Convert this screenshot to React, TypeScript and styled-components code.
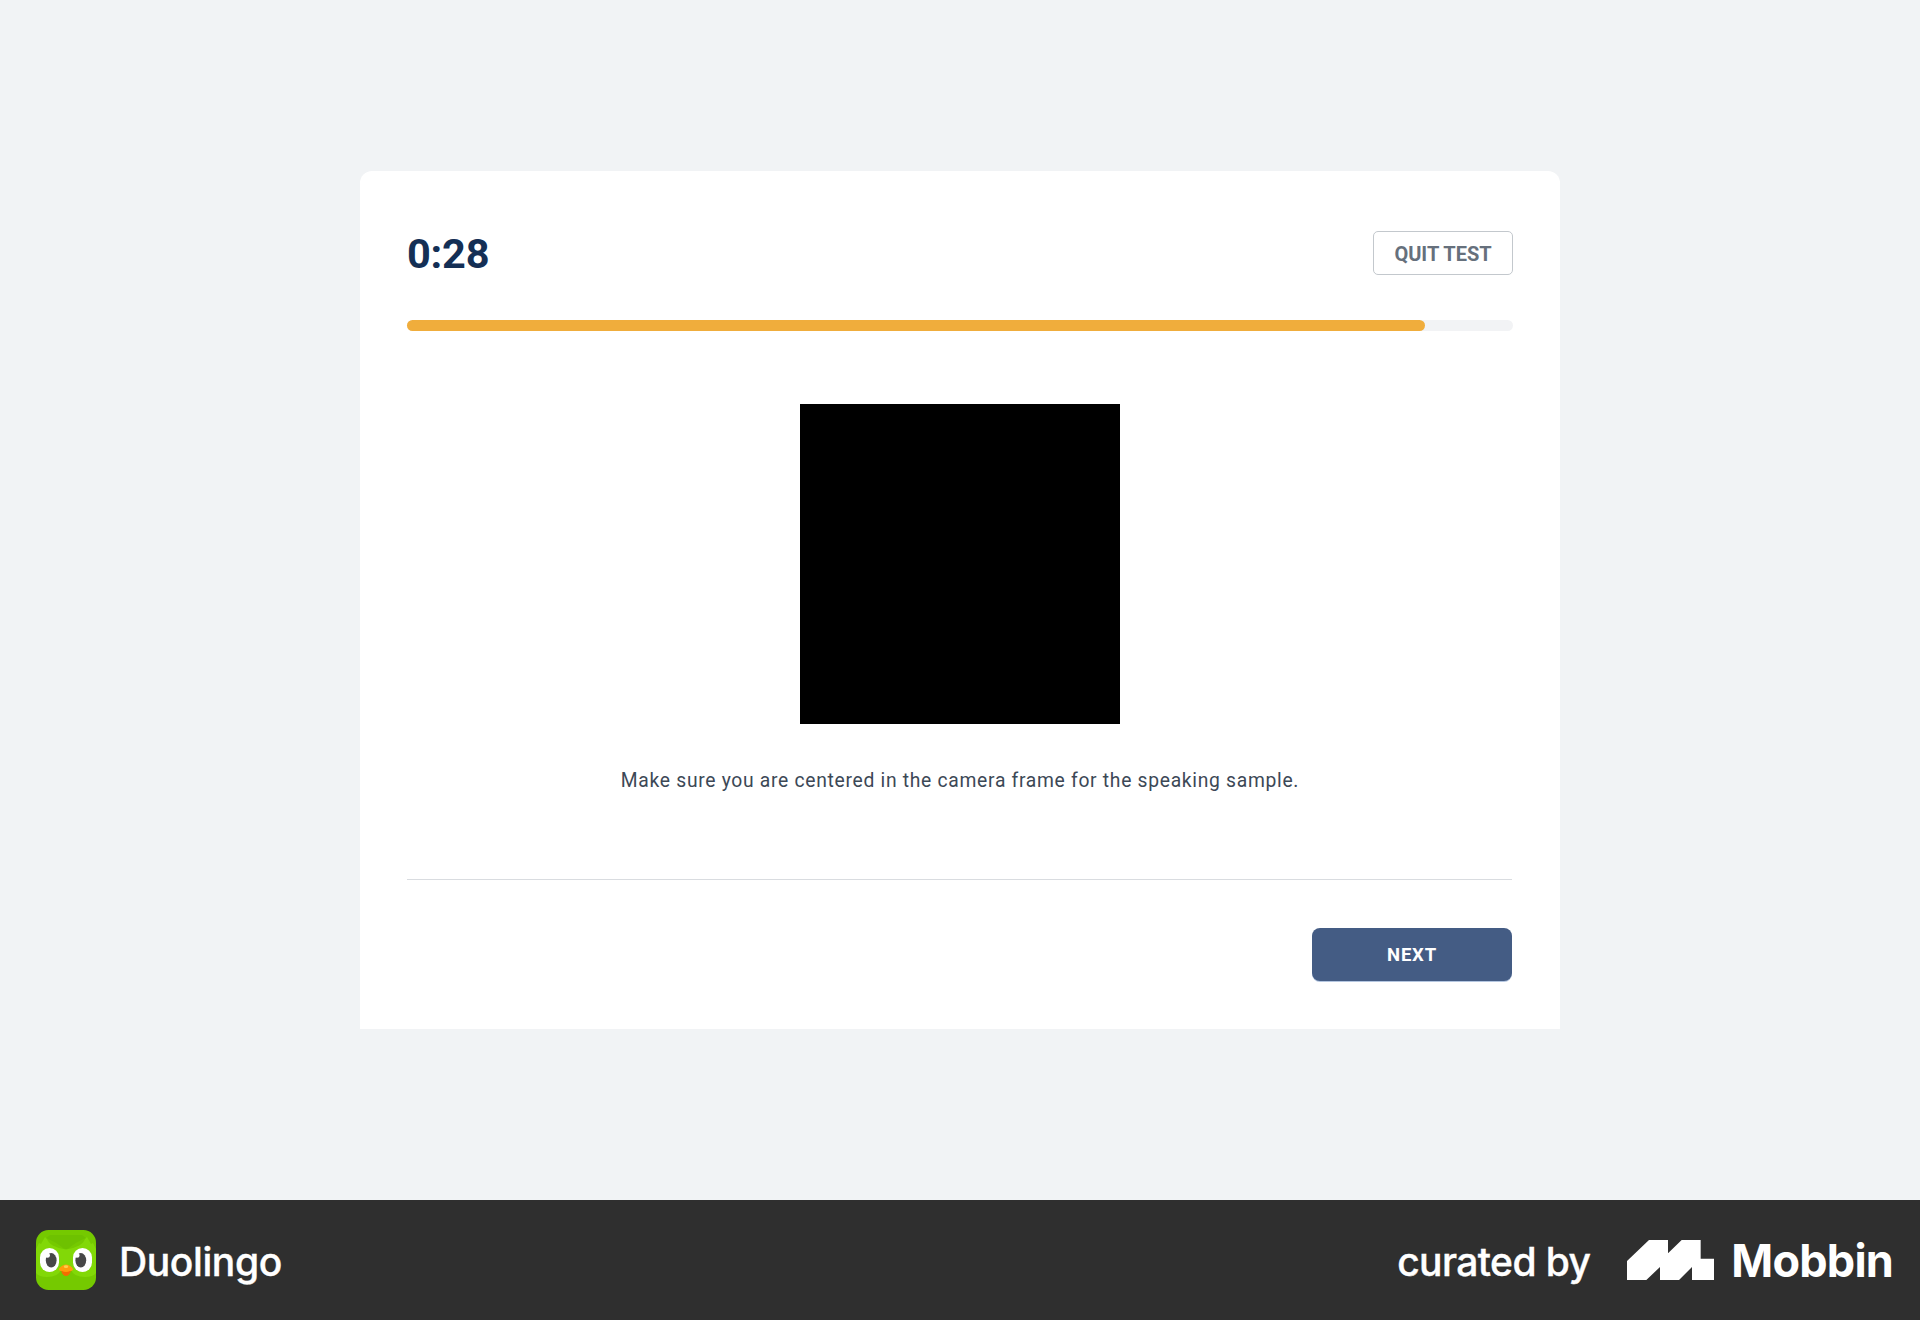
import React from "react";
import styled, { createGlobalStyle } from "styled-components";

const GlobalStyle = createGlobalStyle`
  * { box-sizing: border-box; }
  body { margin: 0; background: #f1f3f5; }
`;

const Page = styled.div`
  width: 1920px;
  height: 1320px;
  display: flex;
  flex-direction: column;
  font-family: Roboto, "Liberation Sans", sans-serif;
`;

const Stage = styled.main`
  flex: 1;
  display: flex;
  justify-content: center;
  align-items: flex-start;
  padding-top: 171px;
`;

const Card = styled.section`
  width: 1200px;
  height: 858px;
  padding: 60px 47px 0;
  display: flex;
  flex-direction: column;
  background: #fff;
  border-radius: 12px 12px 0 0;
`;

const CardHeader = styled.header`
  height: 44px;
  display: flex;
  align-items: center;
  justify-content: space-between;
`;

const Timer = styled.span`
  padding-top: 1px;
  font-size: 41.5px;
  line-height: 44px;
  font-weight: 700;
  letter-spacing: -0.2px;
  color: #142f55;
`;

const QuitButton = styled.button`
  width: 140px;
  height: 44px;
  padding: 2px 0 0;
  border: 1px solid #c3c8cd;
  border-radius: 5px;
  background: #fff;
  font: 700 20px/40px Roboto, sans-serif;
  letter-spacing: 0;
  color: #66707c;
`;

const Track = styled.div`
  height: 11px;
  margin-top: 45px;
  border-radius: 6px;
  background: #f2f3f5;
`;

const Fill = styled.div<{ $percent: number }>`
  width: ${(p) => p.$percent}%;
  height: 100%;
  border-radius: 6px;
  background: #f0ad3c;
`;

const Camera = styled.div`
  width: 320px;
  height: 320px;
  margin: 73px auto 0;
  background: #000;
`;

const Instruction = styled.p`
  margin: 45px 0 0;
  text-align: center;
  font-size: 19.3px;
  line-height: 24px;
  letter-spacing: 0.7px;
  white-space: nowrap;
  color: #3c4856;
`;

const CardFooter = styled.footer`
  margin-top: 86px;
  padding-top: 48px;
  width: 1105px;
  display: flex;
  justify-content: flex-end;
  border-top: 1px solid #d9dce0;
`;

const NextButton = styled.button`
  width: 200px;
  height: 53px;
  padding: 1px 0 0;
  border: 0;
  border-radius: 8px;
  background: #445c84;
  box-shadow: 0 1px 0 #b4c6e0;
  font: 700 18.5px/52px Roboto, sans-serif;
  letter-spacing: 0.8px;
  color: #fff;
`;

const Banner = styled.footer`
  height: 120px;
  padding: 0 27px 0 36px;
  display: flex;
  align-items: center;
  justify-content: space-between;
  background: #2f2f2f;
  color: #fff;
  font-family: Inter, "Liberation Sans", sans-serif;
`;

const BrandGroup = styled.div`
  display: flex;
  align-items: center;
`;

const AppName = styled.span`
  margin-left: 23px;
  padding-top: 3px;
  font-size: 39px;
  line-height: 48px;
  font-weight: 500;
  letter-spacing: -0.4px;
  -webkit-text-stroke: 0.4px #fff;
`;

const Curated = styled.span`
  margin-right: 37px;
  padding-top: 3px;
  font-size: 39px;
  line-height: 48px;
  font-weight: 500;
  letter-spacing: -0.6px;
  -webkit-text-stroke: 0.4px #fff;
`;

const Mobbin = styled.span`
  margin-left: 17px;
  padding-top: 1px;
  font-size: 45px;
  line-height: 48px;
  font-weight: 700;
  letter-spacing: -0.8px;
`;

function DuoIcon() {
  return (
    <svg width="60" height="60" viewBox="0 0 60 60">
      <defs>
        <clipPath id="tile">
          <rect width="60" height="60" rx="12.5" />
        </clipPath>
      </defs>
      <g clipPath="url(#tile)">
        <rect width="60" height="60" fill="#75c900" />
        <path
          d="M0 19 L3 13 L5 14 L9 7 L11 9 Q14 17 30 19.5 Q46 17 49 9 L51 7 L55 14 L57 13 L60 19 V43 Q57 47 49 47 Q38 47 35 40 H25 Q22 47 11 47 Q3 47 0 43 Z"
          fill="#82d807"
        />
        <path d="M10 8 Q20 12 27 18 Q30 20 33 18 Q40 12 50 8 L46 5 H14Z" fill="#6ec100" />
        <rect x="4" y="18" width="19" height="24" rx="9.5" fill="#fff" />
        <rect x="37" y="18" width="19" height="24" rx="9.5" fill="#fff" />
        <ellipse cx="15.2" cy="30.3" rx="5.4" ry="7.2" fill="#474747" />
        <ellipse cx="44.8" cy="30.3" rx="5.4" ry="7.2" fill="#474747" />
        <circle cx="11.4" cy="25.2" r="2.5" fill="#fff" />
        <circle cx="41" cy="25.2" r="2.5" fill="#fff" />
        <path d="M25 39 H35 L34.5 42 Q33 46 30 46 Q27 46 25.5 42Z" fill="#f46c00" />
        <path d="M23 39 Q25 35 30 34.5 Q35 35 37 39 Q37 41 34 41 Q32 42 30 42 Q28 42 26 41 Q23 41 23 39Z" fill="#ff9e0b" />
        <ellipse cx="30" cy="36.7" rx="2.2" ry="1.4" fill="#ffd04d" />
      </g>
    </svg>
  );
}

function MobbinMark() {
  return (
    <svg width="87" height="40" viewBox="51 60 261 120">
      <path
        d="M51 180V123L117 60H174V100L215 60H272V116H312V180H246V141L207 180H150V141L109 180Z"
        fill="#fff"
      />
    </svg>
  );
}

export default function App() {
  return (
    <Page>
      <GlobalStyle />
      <Stage>
        <Card>
          <CardHeader>
            <Timer>0:28</Timer>
            <QuitButton>QUIT TEST</QuitButton>
          </CardHeader>
          <Track>
            <Fill $percent={92.05} />
          </Track>
          <Camera />
          <Instruction>Make sure you are centered in the camera frame for the speaking sample.</Instruction>
          <CardFooter>
            <NextButton>NEXT</NextButton>
          </CardFooter>
        </Card>
      </Stage>
      <Banner>
        <BrandGroup>
          <DuoIcon />
          <AppName>Duolingo</AppName>
        </BrandGroup>
        <BrandGroup>
          <Curated>curated by</Curated>
          <MobbinMark />
          <Mobbin>Mobbin</Mobbin>
        </BrandGroup>
      </Banner>
    </Page>
  );
}
